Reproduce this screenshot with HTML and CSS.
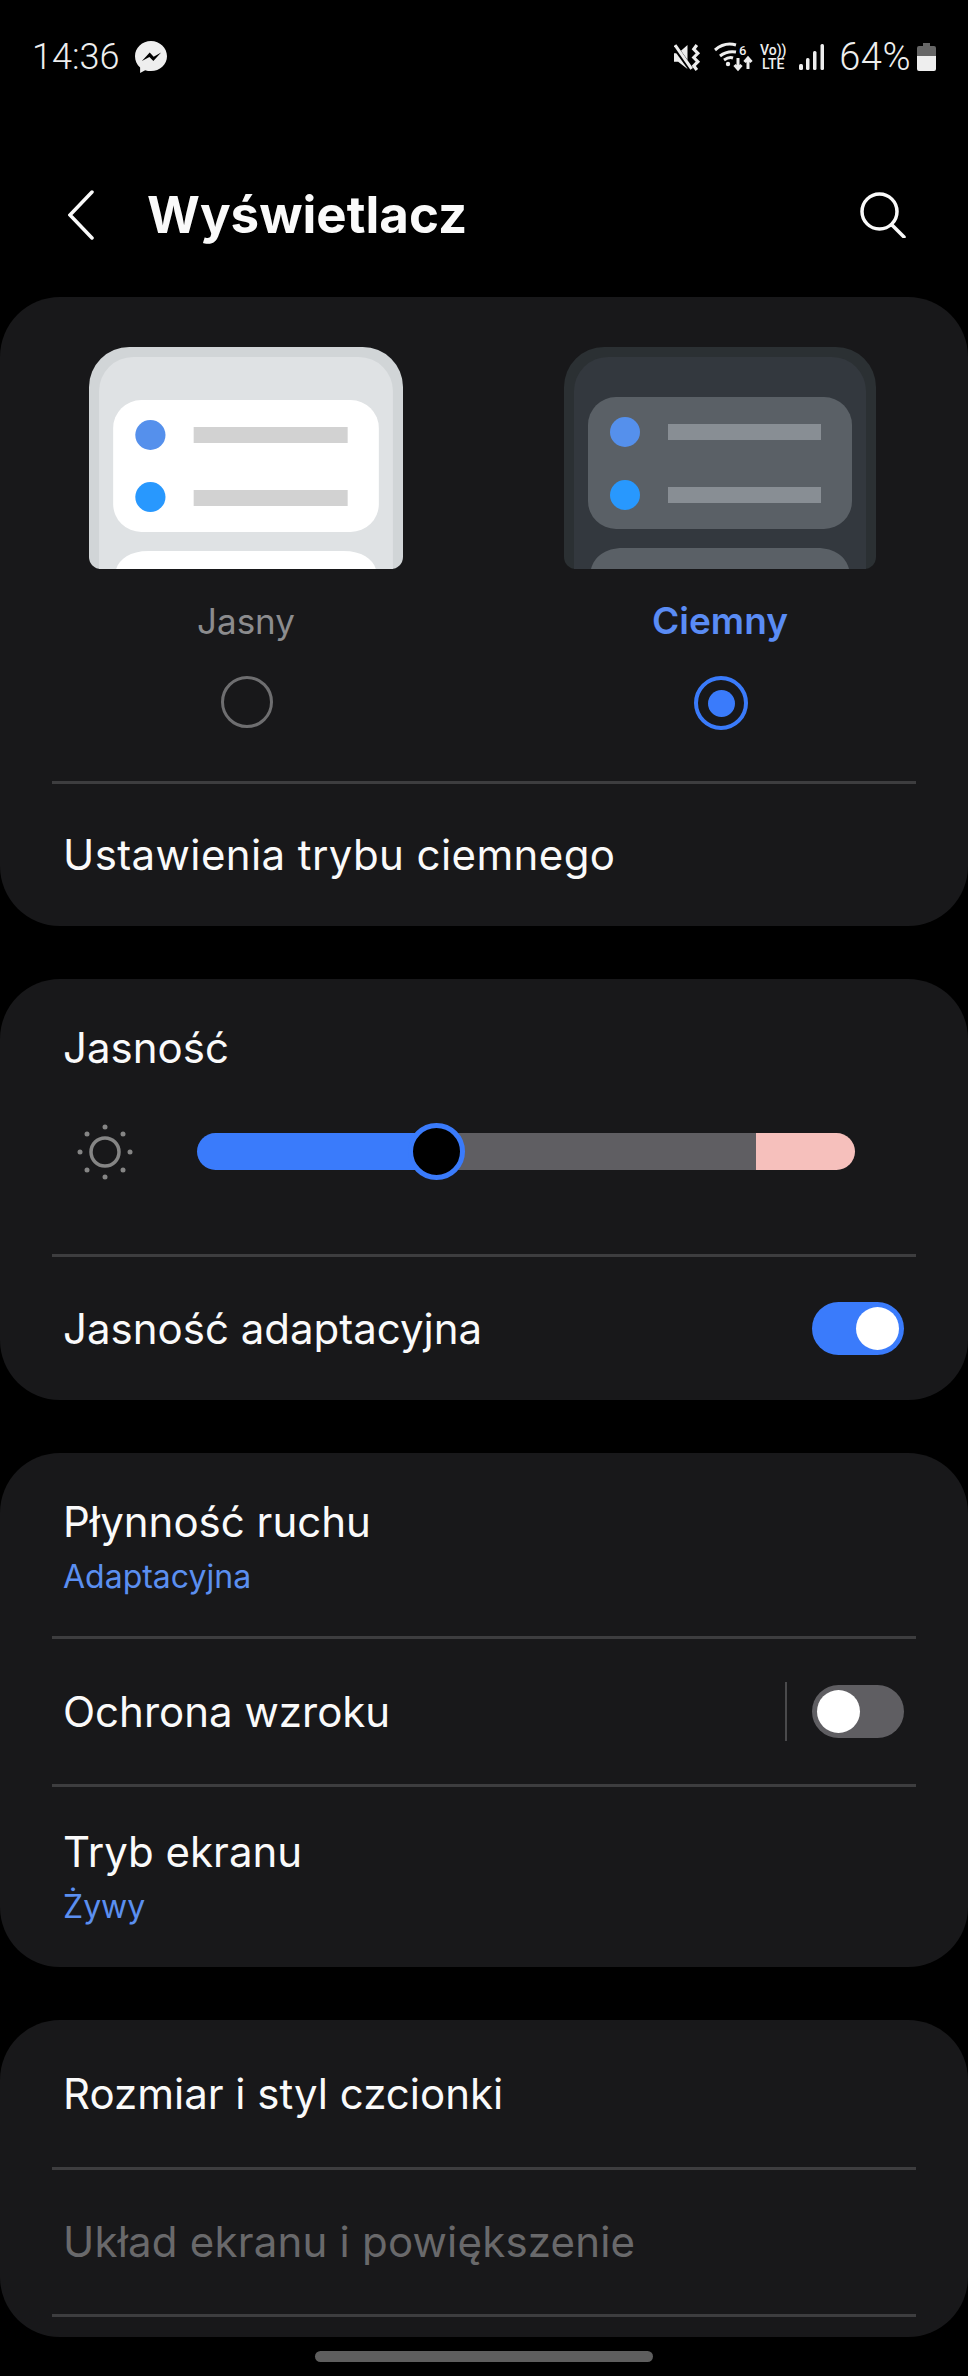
FILE: index.html
```html
<!DOCTYPE html>
<html lang="pl">
<head>
    <meta charset="UTF-8">
    <meta name="viewport" content="width=device-width, initial-scale=1.0">
    <title>Wyświetlacz</title>
    <link rel="stylesheet" href="styles.css">
</head>
<body>
    <div class="status">
        <div class="status-left">
            <span class="time">14:36</span>
            <svg class="ic-messenger" width="32" height="32" viewBox="0 0 30 30">
                <path fill="#eee" d="M15 0C6.700 0 0 6.200 0 14.300c0 4.300 1.800 8 4.800 10.500V30l4.700-2.600c1.700.5 3.600.8 5.500.8 8.300 0 15-6.100 15-13.900S23.300 0 15 0z"/>
                <path fill="#000" d="M6.500 18.800l7.300-8 3.700 3.900 7-3.900-7.300 8-3.700-3.900z"/>
            </svg>
        </div>
        <div class="status-right">
            <svg class="ic-mute" width="27" height="27" viewBox="0 0 26 26">
                <path fill="#eee" d="M0 9h4l9-8v23l-9-7H0z"/>
                <path stroke="#000" stroke-width="5" d="M-1 0L17 25"/>
                <path stroke="#eee" stroke-width="3" d="M1 1L17 24"/>
                <path fill="none" stroke="#eee" stroke-width="3" d="M22 1l-3 4 4 4-4 4 4 4-4 4 3 4"/>
            </svg>
            <svg class="ic-wifi" width="39" height="30" viewBox="0 0 39 30">
                <g fill="none" stroke="#eee" stroke-width="3">
                    <path d="M1 8C8 2 15 1 22 3"/>
                    <path d="M6 14c5-4 10-5 16-4"/>
                    <path d="M10 18c3-2 6-3 9-2"/>
                    <path d="M24 16v11M20.500 23l3.500 4 3.500-4"/>
                    <path d="M34 27V16M30.500 20l3.500-4 3.500 4"/>
                </g>
                <circle cx="14" cy="22" r="2.200" fill="#eee"/>
                <text class="wifi-six" x="25" y="13">6</text>
            </svg>
            <div class="volte"><span>Vo))</span><span>LTE</span></div>
            <svg class="ic-signal" width="25" height="26" viewBox="0 0 25 26">
                <g fill="#eee">
                    <rect x="0" y="20" width="4" height="6" rx="1.500"/>
                    <rect x="7" y="14" width="3.500" height="12" rx="1.500"/>
                    <rect x="14" y="7" width="3.500" height="19" rx="1.500"/>
                    <rect x="21.500" y="0" width="3.500" height="26" rx="1.500"/>
                </g>
            </svg>
            <span class="pct">64%</span>
            <svg class="ic-battery" width="19" height="28" viewBox="0 0 19 28">
                <path fill="#666" d="M6 0h7v3h4a2 2 0 0 1 2 2v8H0V5a2 2 0 0 1 2-2h4z"/>
                <path fill="#eee" d="M0 13h19v13a2 2 0 0 1-2 2H2a2 2 0 0 1-2-2z"/>
            </svg>
        </div>
    </div>

    <header class="appbar">
        <svg class="ic-back" width="26" height="50" viewBox="0 0 26 50">
            <path fill="none" stroke="#fafafa" stroke-width="3.500" stroke-linecap="round" d="M24 2L2 25l22 23"/>
        </svg>
        <h1>Wyświetlacz</h1>
        <svg class="ic-search" width="46" height="46" viewBox="0 0 46 46">
            <circle cx="19.500" cy="19.500" r="17.500" fill="none" stroke="#fafafa" stroke-width="3.500"/>
            <path stroke="#fafafa" stroke-width="3.500" stroke-linecap="round" d="M32 33l12 12"/>
        </svg>
    </header>

    <section class="card">
        <div class="themes">
            <div class="theme theme-light">
                <svg width="314" height="222" viewBox="0 0 312 222" preserveAspectRatio="none">
                    <path fill="#d1d5d7" d="M40 0h232a40 40 0 0 1 40 40v170a12 12 0 0 1-12 12H12a12 12 0 0 1-12-12V40A40 40 0 0 1 40 0z"/>
                    <path fill="#dfe2e4" d="M44 10h224a34 34 0 0 1 34 34v178H10V44a34 34 0 0 1 34-34z"/>
                    <rect x="24" y="53" width="264" height="132" rx="28" fill="#fff"/>
                    <path fill="#fff" d="M27 222c3-10 14-18 32-18h194c18 0 29 8 32 18z"/>
                    <circle cx="61" cy="88" r="15" fill="#5590ec"/>
                    <circle cx="61" cy="150" r="15" fill="#2898fe"/>
                    <rect x="104" y="80" width="153" height="16" fill="#d2d2d2"/>
                    <rect x="104" y="143" width="153" height="16" fill="#d2d2d2"/>
                </svg>
                <span class="theme-name">Jasny</span>
                <span class="radio"></span>
            </div>
            <div class="theme">
                <svg width="312" height="222" viewBox="0 0 312 222">
                    <path fill="#2b3033" d="M40 0h232a40 40 0 0 1 40 40v170a12 12 0 0 1-12 12H12a12 12 0 0 1-12-12V40A40 40 0 0 1 40 0z"/>
                    <path fill="#33383e" d="M44 10h224a34 34 0 0 1 34 34v178H10V44a34 34 0 0 1 34-34z"/>
                    <rect x="24" y="50" width="264" height="132" rx="28" fill="#5a6066"/>
                    <path fill="#5a6066" d="M27 222c3-12 14-21 32-21h194c18 0 29 9 32 21z"/>
                    <circle cx="61" cy="85" r="15" fill="#5590ec"/>
                    <circle cx="61" cy="148" r="15" fill="#2898fe"/>
                    <rect x="104" y="77" width="153" height="16" fill="#888e94"/>
                    <rect x="104" y="140" width="153" height="16" fill="#888e94"/>
                </svg>
                <span class="theme-name active">Ciemny</span>
                <span class="radio checked"></span>
            </div>
        </div>
        <hr class="sep">
        <div class="row row-first">Ustawienia trybu ciemnego</div>
    </section>

    <section class="card">
        <div class="bright-title">Jasność</div>
        <div class="bright">
            <svg class="ic-sun" width="58" height="58" viewBox="0 0 58 58">
                <circle cx="29" cy="29" r="14" fill="none" stroke="#858585" stroke-width="3.500"/>
                <g fill="#858585">
                    <circle cx="29" cy="4" r="2.500"/>
                    <circle cx="29" cy="54" r="2.500"/>
                    <circle cx="4" cy="29" r="2.500"/>
                    <circle cx="54" cy="29" r="2.500"/>
                    <circle cx="11" cy="11" r="2.500"/>
                    <circle cx="47" cy="11" r="2.500"/>
                    <circle cx="11" cy="47" r="2.500"/>
                    <circle cx="47" cy="47" r="2.500"/>
                </g>
            </svg>
            <div class="slider">
                <div class="slider-fill"></div>
                <div class="slider-rest"></div>
                <div class="slider-hot"></div>
                <div class="slider-thumb"></div>
            </div>
        </div>
        <hr class="sep">
        <div class="row row-switch row-adapt">
            <span>Jasność adaptacyjna</span>
            <span class="switch on"><span class="knob"></span></span>
        </div>
    </section>

    <section class="card">
        <div class="row row-two row-motion">
            <span>Płynność ruchu</span>
            <span class="sub">Adaptacyjna</span>
        </div>
        <hr class="sep">
        <div class="row row-switch row-eye">
            <span>Ochrona wzroku</span>
            <span class="vline"></span>
            <span class="switch"><span class="knob"></span></span>
        </div>
        <hr class="sep">
        <div class="row row-two row-mode">
            <span>Tryb ekranu</span>
            <span class="sub">Żywy</span>
        </div>
    </section>

    <section class="card card-last">
        <div class="row row-font">Rozmiar i styl czcionki</div>
        <hr class="sep">
        <div class="row row-zoom disabled">Układ ekranu i powiększenie</div>
        <hr class="sep">
    </section>

    <div class="navpill"></div>
</body>
</html>
```
FILE: styles.css
```css
html, body {
    margin: 0;
    padding: 0;
}

body {
    width: 968px;
    height: 2376px;
    overflow: hidden;
    background-color: #000;
    color: #fafafa;
    font-family: Inter, "Liberation Sans", sans-serif;
}

svg {
    display: block;
    flex: none;
}

/* status bar */
.status {
    padding: 42px 32px 0;
    display: flex;
    justify-content: space-between;
    align-items: center;
    height: 30px;
    color: #eee;
    font-family: Roboto, sans-serif;
}

.status-left {
    display: flex;
    align-items: center;
    gap: 16px;
}

.time {
    font-size: 36px;
    font-weight: 300;
}

.status-right {
    display: flex;
    align-items: center;
}

.ic-wifi {
    margin-left: 13px;
}

.wifi-six {
    font-size: 13px;
    font-weight: 500;
    fill: #eee;
}

.volte {
    margin-left: 6px;
    width: 28px;
    display: flex;
    flex-direction: column;
    align-items: center;
    font-size: 14px;
    font-weight: 500;
    line-height: 14px;
}

.ic-signal {
    margin-left: 12px;
}

.pct {
    margin-left: 15px;
    font-size: 38px;
    font-weight: 300;
    letter-spacing: 0.5px;
}

.ic-battery {
    margin-left: 6px;
}

/* title bar */
.appbar {
    height: 225px;
    box-sizing: border-box;
    padding: 60px 62px 0 68px;
    display: flex;
    align-items: center;
}

.appbar h1 {
    margin: 0 auto 0 53px;
    font-size: 51px;
    font-weight: 700;
}

/* cards */
.card {
    background-color: #18181a;
    border-radius: 60px;
    margin-bottom: 53px;
    font-size: 42px;
    line-height: 50px;
}

.card-last {
    padding-bottom: 20px;
    margin-bottom: 14px;
}

.sep {
    margin: 0 52px;
    height: 3px;
    border: none;
    background-color: #3d3d3f;
}

.row {
    padding: 0 64px 0 63px;
    display: flex;
    align-items: center;
}

.row-first {
    height: 142px;
    letter-spacing: 0.4px;
}

.row-adapt {
    height: 143px;
}

.row-eye {
    height: 145px;
}

.row-font {
    height: 147px;
}

.row-zoom {
    height: 144px;
    letter-spacing: 0.2px;
}

.row-switch {
    justify-content: space-between;
}

.row-two {
    flex-direction: column;
    align-items: flex-start;
    box-sizing: border-box;
}

.row-motion {
    height: 183px;
    padding-top: 44px;
}

.row-mode {
    height: 180px;
    padding-top: 40px;
}

.sub {
    margin-top: 10px;
    font-size: 32px;
    line-height: 40px;
    color: #5b8ff0;
}

.disabled {
    color: #69696b;
}

/* light and dark choice */
.themes {
    height: 484px;
    box-sizing: border-box;
    padding: 50px 92px 0 89px;
    display: flex;
    justify-content: space-between;
}

.theme {
    width: 312px;
    display: flex;
    flex-direction: column;
    align-items: center;
}

.theme-light {
    width: 314px;
}

.theme-name {
    margin-top: 28px;
    font-size: 35px;
    line-height: 48px;
    color: #8c8c8e;
}

.theme-name.active {
    color: #5a8cf5;
    font-size: 37px;
    font-weight: 600;
}

.radio {
    margin: 31px 0 0 2px;
    width: 46px;
    height: 46px;
    border: 3px solid #6e6e70;
    border-radius: 50%;
}

.radio.checked {
    display: flex;
    align-items: center;
    justify-content: center;
    width: 46px;
    height: 46px;
    border: 4px solid #3a7bfb;
}

.radio.checked::after {
    content: "";
    width: 27px;
    height: 27px;
    border-radius: 50%;
    background-color: #3a7bfb;
}

/* brightness */
.bright-title {
    padding: 44px 64px 0 63px;
}

.bright {
    height: 181px;
    box-sizing: border-box;
    padding: 0 113px 24px 76px;
    display: flex;
    align-items: center;
}

.slider {
    position: relative;
    margin-left: 63px;
    width: 658px;
    height: 37px;
    display: flex;
    border-radius: 19px;
}

.slider-fill {
    width: 240px;
    background-color: #3a7bfb;
    border-radius: 19px 0 0 19px;
}

.slider-rest {
    width: 319px;
    background-color: #5f5e62;
}

.slider-hot {
    width: 99px;
    background-color: #f6c0bc;
    border-radius: 0 19px 19px 0;
}

.slider-thumb {
    position: absolute;
    left: 211px;
    top: -10px;
    box-sizing: border-box;
    width: 57px;
    height: 57px;
    border-radius: 50%;
    background-color: #000;
    border: 5px solid #3a7bfb;
}

/* switches */
.switch {
    box-sizing: border-box;
    width: 92px;
    height: 53px;
    padding: 5px;
    border-radius: 27px;
    background-color: #5f5e62;
    display: flex;
    justify-content: flex-start;
}

.switch.on {
    background-color: #3a7bfb;
    justify-content: flex-end;
}

.knob {
    width: 43px;
    height: 43px;
    border-radius: 50%;
    background-color: #fff;
}

.vline {
    width: 2px;
    height: 59px;
    margin: 0 25px 0 auto;
    background-color: #4a4a4c;
}

/* navigation handle */
.navpill {
    margin: 0 auto;
    width: 338px;
    height: 11px;
    border-radius: 6px;
    background-color: #5e5e5e;
}
```
